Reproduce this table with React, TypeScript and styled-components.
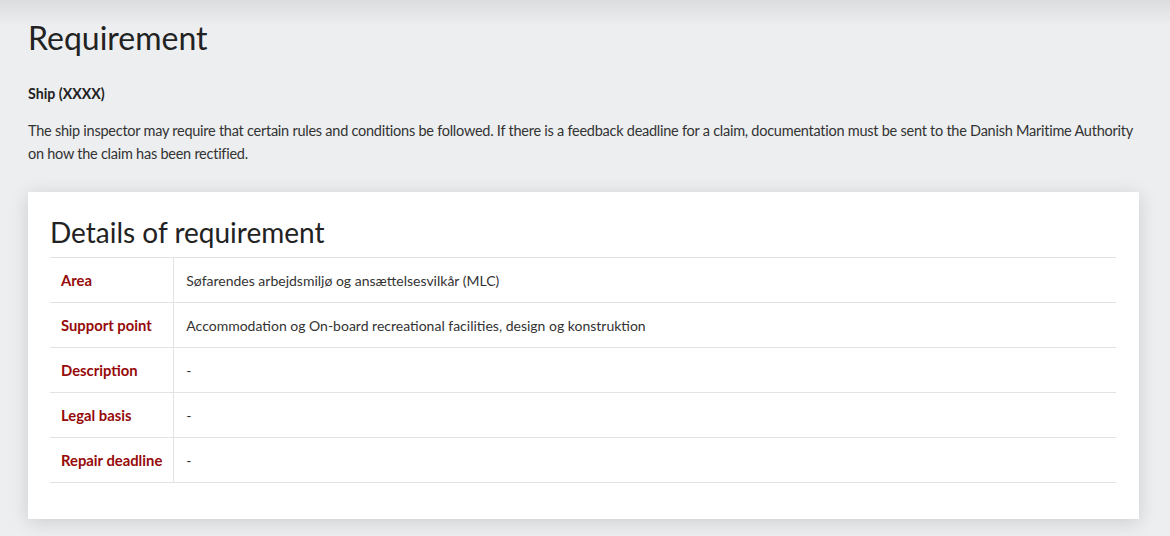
import React from "react";
import styled, { createGlobalStyle } from "styled-components";

const Global = createGlobalStyle`
  html, body { margin: 0; padding: 0; }
  body {
    background: #eceef0;
    font-family: Lato, "Liberation Sans", sans-serif;
    color: #333;
  }
`;

const Page = styled.main`
  min-height: 536px;
  box-sizing: border-box;
  padding: 18px 31px 17px 28px;
  background: linear-gradient(#dcdddf 0px, #eceef0 26px, #eceef0 100%);
`;

const Title = styled.h1`
  margin: 0;
  font-size: 32px;
  font-weight: 400;
  line-height: 40px;
  color: #222;
`;

const Ship = styled.h2`
  margin: 26px 0 0 0;
  font-size: 14.2px;
  font-weight: 700;
  line-height: 20px;
  color: #222;
`;

const Intro = styled.p`
  margin: 15px 0 0 0;
  font-size: 14.5px;
  line-height: 23px;
  letter-spacing: -0.25px;
  color: #333;
`;

const Card = styled.section`
  margin-top: 27px;
  background: #fff;
  padding: 20px 23px 36px 22px;
  box-shadow: 0 3px 18px rgba(0, 0, 0, 0.14);
`;

const CardTitle = styled.h2`
  margin: 0 0 5px 0;
  font-size: 28px;
  font-weight: 400;
  line-height: 40px;
  color: #222;
`;

const Table = styled.table`
  width: 100%;
  border-collapse: collapse;
  font-size: 14px;
`;

const Row = styled.tr`
  border-top: 1px solid #e3e3e3;
  border-bottom: 1px solid #e3e3e3;
  height: 45px;
`;

const Label = styled.th`
  width: 123px;
  box-sizing: border-box;
  text-align: left;
  padding: 0 11px;
  font-size: 14.8px;
  font-weight: 700;
  color: #960a0a;
  border-right: 1px solid #e3e3e3;
  white-space: nowrap;
`;

const Value = styled.td`
  padding: 0 12px;
  color: #333;
`;

const rows: [string, string][] = [
  ["Area", "Søfarendes arbejdsmiljø og ansættelsesvilkår (MLC)"],
  ["Support point", "Accommodation og On-board recreational facilities, design og konstruktion"],
  ["Description", "-"],
  ["Legal basis", "-"],
  ["Repair deadline", "-"],
];

export default function App() {
  return (
    <>
      <Global />
      <Page>
        <Title>Requirement</Title>
        <Ship>Ship (XXXX)</Ship>
        <Intro>
          The ship inspector may require that certain rules and conditions be followed. If there is a feedback
          deadline for a claim, documentation must be sent to the Danish Maritime Authority on how the claim has
          been rectified.
        </Intro>
        <Card>
          <CardTitle>Details of requirement</CardTitle>
          <Table>
            <tbody>
              {rows.map(([k, v]) => (
                <Row key={k}>
                  <Label>{k}</Label>
                  <Value>{v}</Value>
                </Row>
              ))}
            </tbody>
          </Table>
        </Card>
      </Page>
    </>
  );
}
